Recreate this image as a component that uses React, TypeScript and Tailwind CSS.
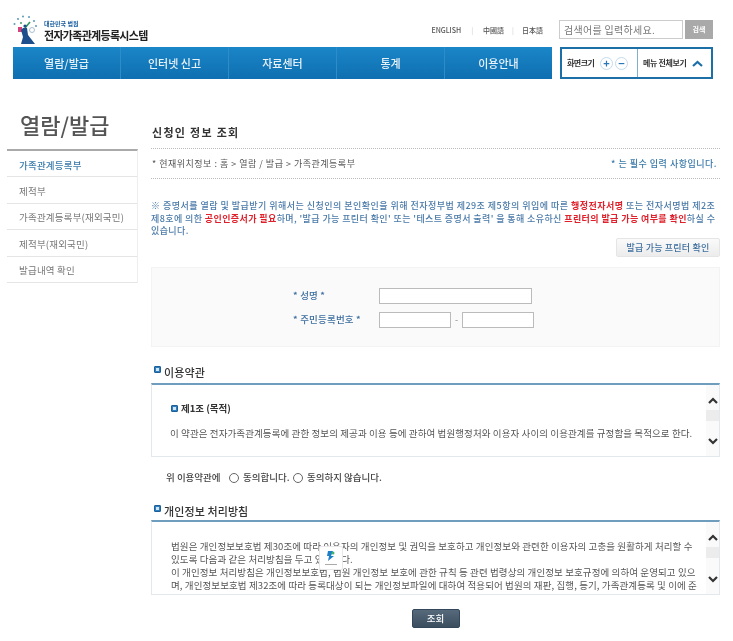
import React from "react";

const font = { fontFamily: '"Noto Sans CJK KR", "Liberation Sans", sans-serif' };

function Logo() {
  return (
    <svg width="24" height="30" viewBox="0 0 24 30">
      <g fill="#5a9ab8">
        <circle cx="10" cy="1.5" r="1" />
        <circle cx="16" cy="2" r="1" />
        <circle cx="5" cy="4" r="1" />
        <circle cx="1.5" cy="9" r="1" />
        <circle cx="21" cy="6" r="1" />
        <circle cx="23" cy="11" r="1" />
      </g>
      <circle cx="8" cy="8" r="1" fill="#3fa06a" />
      <path d="M5 12 h4 v5 h-4 z" fill="#d8417a" />
      <path d="M12 13 L17 7" stroke="#2f9a5a" strokeWidth="1.6" fill="none" />
      <circle cx="19" cy="15" r="2.5" stroke="#a8c0d0" strokeWidth="1" fill="none" />
      <circle cx="12" cy="11" r="1.6" fill="#1d4f8c" />
      <path d="M10 13 L14 13 L15 20 L22 29 L8 29 L10 22 L8 15 Z" fill="#1d4f8c" />
    </svg>
  );
}

function Chevron({ up, className }: { up?: boolean; className?: string }) {
  return (
    <svg width="10" height="7" viewBox="0 0 10 7" className={className}>
      <path d={up ? "M1 6 L5 2 L9 6" : "M1 1 L5 5 L9 1"} stroke="#333" strokeWidth="2.2" fill="none" />
    </svg>
  );
}

function Scrollbar() {
  return (
    <div className="w-[13px] shrink-0 bg-[#fafafa] flex flex-col items-center pt-[12px]">
      <Chevron up />
      <div className="w-full h-[11px] bg-[#ececec] mt-[6px]" />
      <div className="flex-1" />
      <Chevron className="mb-[11px]" />
    </div>
  );
}

function SquareIcon() {
  return (
    <span className="w-[7px] h-[7px] bg-[#2f7fc0] border border-[#1f5f98] rounded-[1px] flex items-center justify-center shrink-0">
      <span className="w-[3px] h-[3px] bg-[#cfe6f5]" />
    </span>
  );
}

function Heading({ children, className }: { children: React.ReactNode; className?: string }) {
  return (
    <div className={`flex items-start ${className ?? ""}`}>
      <span className="mt-[1px] mr-[3px] ml-[3px]"><SquareIcon /></span>
      <span className="text-[11px] leading-[14px] font-medium text-[#333] tracking-[0.1px]">{children}</span>
    </div>
  );
}

function Radio() {
  return <span className="w-[10px] h-[10px] rounded-full border border-[#666] bg-white inline-block shrink-0" />;
}

const navItems = ["열람/발급", "인터넷 신고", "자료센터", "통계", "이용안내"];
const sideItems = ["제적부", "가족관계등록부(재외국민)", "제적부(재외국민)", "발급내역 확인"];

export default function App() {
  return (
    <div style={font} className="w-[733px] h-[641px] overflow-hidden bg-white relative blur-[0.4px]">
      {/* header */}
      <div className="h-[47px] flex items-start">
        <div className="ml-[13px] mt-[15px] flex">
          <Logo />
          <div className="ml-[7px] mt-[5px]">
            <div className="text-[6px] leading-[8px] font-bold text-[#1d5fa0]">대한민국 법원</div>
            <div className="text-[11px] leading-[14px] font-bold text-[#222] tracking-[-0.7px]">전자가족관계등록시스템</div>
          </div>
        </div>
        <div className="ml-auto mr-[20px] mt-[20px] flex items-start">
          <div className="flex items-center text-[7px] leading-[18px] text-[#555] h-[20px]">
            <span className="font-medium">ENGLISH</span>
            <span className="mx-[10px] text-[#ccc]">|</span>
            <span className="font-medium">中國語</span>
            <span className="mx-[8px] text-[#ccc]">|</span>
            <span className="font-medium">日本語</span>
          </div>
          <div className="ml-[16px] w-[124px] h-[19px] border border-[#ccc] text-[10px] leading-[17px] text-[#777] pl-[4px] tracking-[0.3px]">검색어를 입력하세요.</div>
          <div className="ml-[2px] w-[28px] h-[19px] bg-[#a9a9a9] text-white text-[7px] font-bold leading-[19px] text-center">검색</div>
        </div>
      </div>
      {/* nav */}
      <div className="flex ml-[13px] h-[32px]">
        <div className="w-[539px] flex bg-gradient-to-b from-[#1a86c8] to-[#0f6fb0]">
          {navItems.map((t, i) => (
            <div key={t} className={`flex-1 flex items-center justify-center text-white/90 text-[11px] font-medium ${i < 4 ? "border-r border-[#2f8cc6]" : ""}`}>
              {t}
            </div>
          ))}
        </div>
        <div className="ml-[8px] w-[153px] border-2 border-[#1d6fa8] flex bg-white items-center">
          <div className="w-[76px] h-full flex items-center pl-[5px] border-r border-[#7fb0d0]">
            <span className="text-[8px] font-bold text-[#333] tracking-[-0.5px] w-[33px]">화면크기</span>
            <span className="w-[13px] h-[13px] rounded-full border border-[#c5dbea] flex items-center justify-center text-[11px] leading-none font-bold text-[#2a78b8] mr-[2px]">+</span>
            <span className="w-[13px] h-[13px] rounded-full border border-[#c5dbea] flex items-center justify-center text-[11px] leading-none font-bold text-[#2a78b8]">−</span>
          </div>
          <div className="flex-1 flex items-center pl-[5px]">
            <span className="text-[8px] font-bold text-[#333] tracking-[-0.35px] mr-[5px]">메뉴 전체보기</span>
            <svg width="11" height="7" viewBox="0 0 11 7">
              <path d="M1 6 L5.5 2 L10 6" stroke="#1d6fa8" strokeWidth="2.2" fill="none" />
            </svg>
          </div>
        </div>
      </div>
      {/* body */}
      <div className="flex">
        {/* sidebar */}
        <div className="w-[131px] ml-[7px] mr-[13px] shrink-0">
          <div className="mt-[30px] h-[40px] pl-[13px] text-[22px] leading-[30px] font-medium text-[#555]">열람/발급</div>
          <div className="border-t-2 border-[#aaa] border-r border-r-[#eee] text-[9.5px] text-[#777] tracking-[0.2px]">
            <div className="h-[26.4px] pl-[12px] pt-[2px] flex items-center border-b border-[#e5e5e5] text-[#3a7aaa] font-medium">가족관계등록부</div>
            {sideItems.map((t) => (
              <div key={t} className="h-[26.4px] pl-[12px] pt-[2px] flex items-center border-b border-[#e5e5e5]">{t}</div>
            ))}
          </div>
        </div>
        {/* main */}
        <div className="w-[569px] shrink-0">
          <div className="mt-[46px] h-[24px] pl-[1px] text-[11px] leading-[14px] font-bold text-[#333] tracking-[1.3px] border-b border-dotted border-[#bbb]">신청인 정보 조회</div>
          <div className="h-[30px] flex items-center justify-between border-b border-dotted border-[#bbb] text-[9px] tracking-[0.5px]">
            <span className="text-[#555] ml-[1px]">* 현재위치정보 : 홈 &gt; 열람 / 발급 &gt; 가족관계등록부</span>
            <span className="text-[#3a7aaa] font-medium mr-[3px]">* 는 필수 입력 사항입니다.</span>
          </div>
          <div className="mt-[21px] text-[9px] leading-[12.5px] font-medium text-[#4a7aa8] whitespace-nowrap">
            <div className="tracking-[0.47px]">※ 증명서를 열람 및 발급받기 위해서는 신청인의 본인확인을 위해 전자정부법 제29조 제5항의 위임에 따른 <span className="text-[#e0202a] font-bold">행정전자서명</span> 또는 전자서명법 제2조</div>
            <div className="tracking-[0.4px]">제8호에 의한 <span className="text-[#e0202a] font-bold">공인인증서가 필요</span>하며, '발급 가능 프린터 확인' 또는 '테스트 증명서 출력' 을 통해 소유하신 <span className="text-[#e0202a] font-bold">프린터의 발급 가능 여부를 확인</span>하실 수</div>
            <div className="tracking-[0.4px]">있습니다.</div>
          </div>
          <div className="flex justify-end">
            <div className="w-[104px] h-[19px] bg-gradient-to-b from-[#fafafa] to-[#ececec] border border-[#e5e5e5] rounded-[2px] text-[9px] leading-[17px] text-center font-medium text-[#3f6f9f] tracking-[0.2px]">발급 가능 프린터 확인</div>
          </div>
          {/* form */}
          <div className="mt-[10px] h-[80px] bg-[#fafafa] border border-[#f3f3f3] pt-[20px] pl-[141px]">
            <div className="flex items-center h-[16px]">
              <span className="w-[86px] text-[9.5px] font-medium text-[#3f6f9f] tracking-[0.2px]">* 성명 *</span>
              <div className="w-[153px] h-[16px] bg-white border border-[#bbb]" />
            </div>
            <div className="flex items-center h-[16px] mt-[8px]">
              <span className="w-[86px] text-[9.5px] font-medium text-[#3f6f9f] tracking-[0.2px]">* 주민등록번호 *</span>
              <div className="w-[72px] h-[16px] bg-white border border-[#bbb]" />
              <span className="w-[11px] text-center text-[9px] text-[#888]">-</span>
              <div className="w-[72px] h-[16px] bg-white border border-[#bbb]" />
            </div>
          </div>
          {/* terms */}
          <Heading className="mt-[18px]">이용약관</Heading>
          <div className="mt-[4px] h-[74px] border border-[#e3e8ec] border-t-2 border-t-[#6f9dbd] flex">
            <div className="flex-1 pl-[18px] pt-[17px] min-w-0">
              <div className="flex items-center">
                <span className="ml-[1px]"><SquareIcon /></span>
                <span className="ml-[3px] text-[9.5px] leading-[13px] font-bold text-[#333]">제1조 (목적)</span>
              </div>
              <div className="mt-[12px] text-[9.5px] leading-[13px] text-[#555] whitespace-nowrap tracking-[0.1px]">이 약관은 전자가족관계등록에 관한 정보의 제공과 이용 등에 관하여 법원행정처와 이용자 사이의 이용관계를 규정함을 목적으로 한다.</div>
            </div>
            <Scrollbar />
          </div>
          <div className="mt-[14px] ml-[15px] flex items-center h-[14px] text-[9.5px] font-medium text-[#444]">
            <span className="w-[63px]">위 이용약관에</span>
            <Radio />
            <span className="ml-[4px] w-[50px]">동의합니다.</span>
            <Radio />
            <span className="ml-[4px]">동의하지 않습니다.</span>
          </div>
          {/* privacy */}
          <Heading className="mt-[19px]">개인정보 처리방침</Heading>
          <div className="mt-[2px] h-[75px] border border-[#e3e8ec] border-t-2 border-t-[#6f9dbd] flex relative">
            <div className="flex-1 pl-[19px] pr-[4px] pt-[18px] text-[9.5px] leading-[13px] text-[#555] overflow-hidden tracking-[0.1px]">
              법원은 개인정보보호법 제30조에 따라 이용자의 개인정보 및 권익을 보호하고 개인정보와 관련한 이용자의 고충을 원활하게 처리할 수 있도록 다음과 같은 처리방침을 두고 있습니다.
              <br />
              이 개인정보 처리방침은 개인정보보호법, 법원 개인정보 보호에 관한 규칙 등 관련 법령상의 개인정보 보호규정에 의하여 운영되고 있으며, 개인정보보호법 제32조에 따라 등록대상이 되는 개인정보파일에 대하여 적용되어 법원의 재판, 집행, 등기, 가족관계등록 및 이에 준하는 업무에 적용됩니다.
            </div>
            <Scrollbar />
            <div className="absolute left-[167px] top-[24px] w-[24px] h-[24px] bg-white border border-[#e8e8e8] rounded-[2px] flex flex-col items-center pt-[3px]">
              <svg width="10" height="12" viewBox="0 0 10 12">
                <path d="M2 1 L7 1 L5 6 L8 6 L2 11 L3 6 L1 6 Z" fill="#1d7fc8" />
                <circle cx="7" cy="3" r="1.5" fill="#3fb36a" />
              </svg>
              <span className="w-[12px] h-[1px] bg-[#aaa] mt-[2px]" />
            </div>
          </div>
          <div className="flex justify-center mt-[14px]">
            <div className="w-[48px] h-[19px] rounded-[2px] bg-gradient-to-b from-[#566a7c] to-[#3a4e60] border border-[#33465a] text-white text-[9.5px] leading-[17px] font-medium text-center">조회</div>
          </div>
        </div>
      </div>
    </div>
  );
}
